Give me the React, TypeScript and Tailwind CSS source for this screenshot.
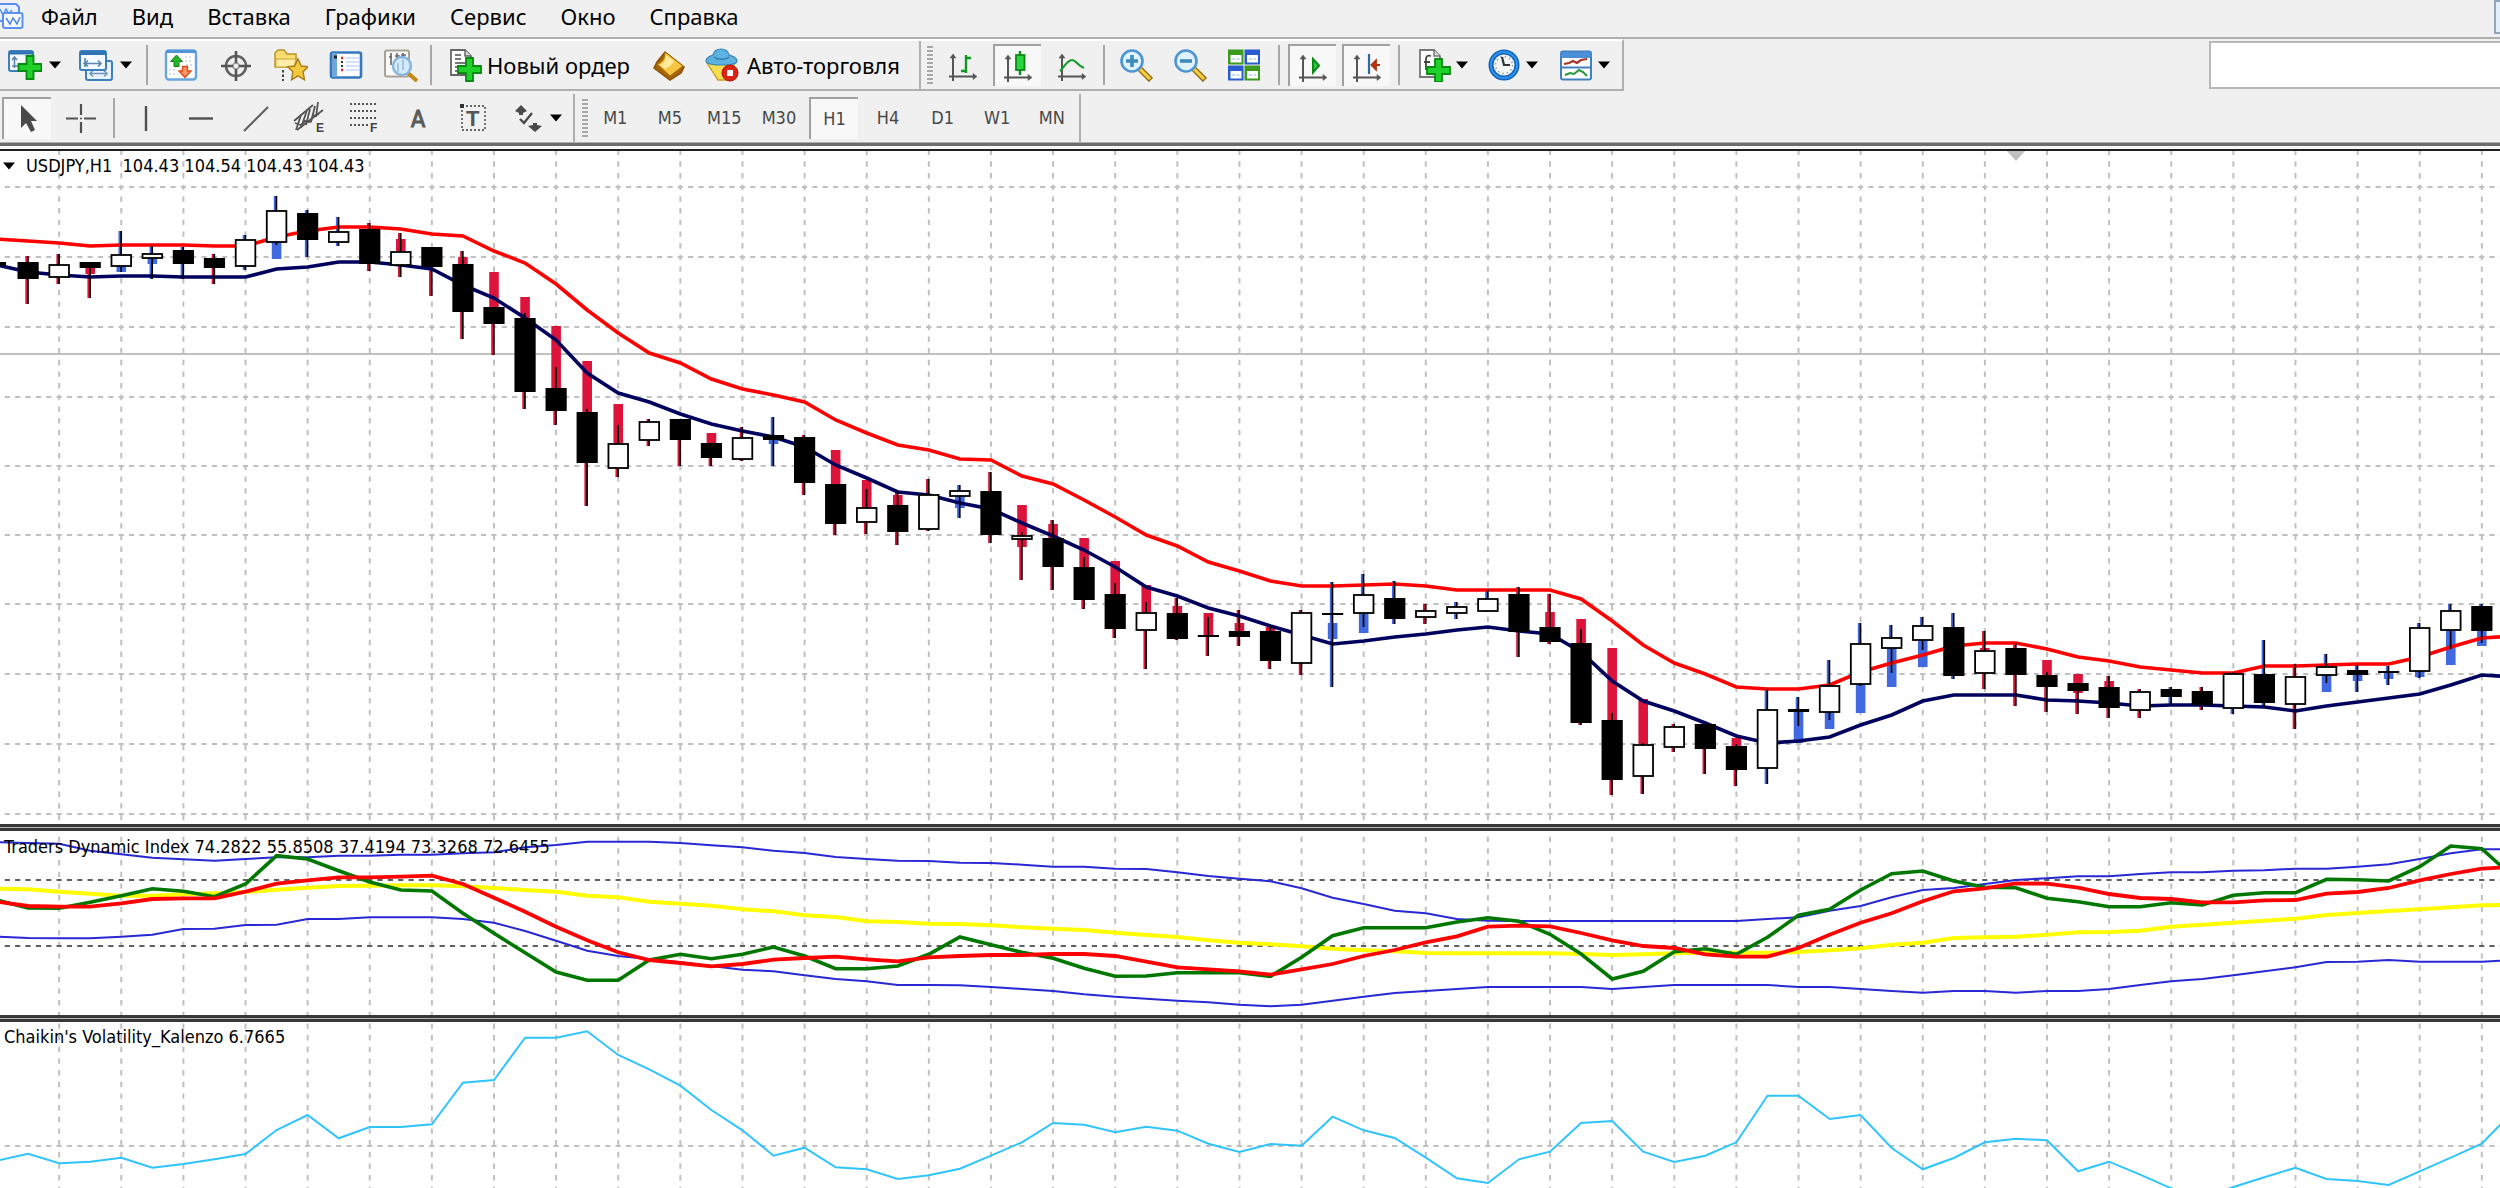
import type { ReactNode } from "react";
import clsx from "clsx";

type Trend = "r" | "b";

// kind, trend, wick top, body top, body bottom, wick bottom, [bar top, bar bottom]
type Candle = [0 | 1, Trend, number, number, number, number, number?, number?];

const STEP = 31.06;
const FIRST_X = 28.1;
const WIDTH = 2500;

const CANDLES: Candle[] = [
  [1, "r", 256, 262, 279, 304],
  [0, "r", 254, 264, 277, 284],
  [1, "r", 262, 262, 268, 298, 268, 274],
  [0, "b", 231, 254, 266, 272, 266, 272],
  [0, "b", 246, 253, 258, 279, 258, 264],
  [1, "b", 247, 250, 264, 279],
  [1, "r", 254, 258, 268, 284],
  [0, "b", 235, 239, 266, 270],
  [0, "b", 196, 210, 242, 245, 242, 259],
  [1, "b", 210, 213, 240, 257],
  [0, "b", 217, 231, 242, 246],
  [1, "r", 223, 229, 264, 271],
  [0, "r", 233, 251, 265, 277, 239, 251],
  [1, "r", 247, 247, 267, 296],
  [1, "r", 251, 264, 312, 339, 257, 264],
  [1, "r", 307, 307, 324, 355, 272, 307],
  [1, "r", 313, 318, 392, 409, 297, 318],
  [1, "r", 367, 388, 411, 425, 326, 388],
  [1, "r", 409, 412, 463, 506, 361, 412],
  [0, "r", 425, 443, 468, 477, 404, 443],
  [0, "r", 419, 421, 440, 446],
  [1, "r", 419, 419, 440, 466],
  [1, "r", 443, 443, 458, 466, 433, 443],
  [0, "r", 427, 437, 459, 461],
  [1, "b", 417, 435, 440, 466, 440, 444],
  [1, "r", 435, 437, 483, 495],
  [1, "r", 484, 484, 524, 535, 450, 484],
  [0, "r", 489, 507, 522, 534, 480, 507],
  [1, "r", 490, 505, 532, 545, 495, 505],
  [0, "r", 479, 494, 529, 531],
  [0, "b", 485, 490, 496, 518, 496, 508],
  [1, "r", 472, 491, 535, 543],
  [0, "r", 532, 535, 539, 580, 505, 547],
  [1, "r", 520, 538, 567, 590, 524, 538],
  [1, "r", 557, 567, 600, 609, 538, 567],
  [1, "r", 583, 594, 629, 638, 561, 594],
  [0, "r", 602, 612, 630, 669, 585, 612],
  [1, "r", 598, 613, 639, 640, 606, 613],
  [1, "r", 617, 635, 637, 656, 613, 635],
  [1, "r", 610, 631, 637, 646, 623, 631],
  [1, "r", 625, 631, 661, 669, 627, 631],
  [0, "r", 610, 612, 663, 675],
  [1, "b", 582, 613, 615, 687, 623, 639],
  [0, "b", 574, 594, 613, 627, 613, 633],
  [1, "b", 581, 598, 619, 624],
  [0, "r", 604, 610, 617, 624],
  [0, "b", 602, 606, 613, 619],
  [0, "b", 589, 598, 611, 612],
  [1, "r", 587, 594, 632, 657],
  [1, "r", 594, 627, 642, 644, 612, 627],
  [1, "r", 629, 643, 723, 725, 619, 643],
  [1, "r", 713, 720, 780, 795, 648, 720],
  [0, "r", 743, 744, 776, 794, 699, 744],
  [0, "r", 724, 726, 747, 752],
  [1, "r", 724, 724, 749, 774],
  [1, "r", 744, 746, 770, 786, 738, 746],
  [0, "b", 689, 709, 768, 784],
  [1, "b", 697, 709, 712, 726, 712, 743],
  [0, "b", 660, 685, 712, 720, 712, 729],
  [0, "b", 623, 643, 684, 686, 684, 713],
  [0, "b", 625, 637, 648, 673, 648, 687],
  [0, "b", 617, 625, 640, 650, 640, 667],
  [1, "b", 613, 627, 676, 679],
  [0, "r", 631, 650, 673, 689, 648, 650],
  [1, "r", 643, 648, 675, 706],
  [1, "r", 672, 675, 687, 712, 660, 675],
  [1, "r", 683, 683, 691, 714, 674, 693],
  [1, "r", 676, 687, 708, 718, 681, 687],
  [0, "r", 689, 691, 710, 718],
  [1, "b", 687, 689, 697, 705],
  [1, "r", 687, 691, 705, 710],
  [0, "b", 672, 673, 708, 714],
  [1, "b", 640, 674, 703, 707],
  [0, "r", 664, 676, 704, 729],
  [0, "b", 654, 666, 675, 683, 675, 692],
  [1, "b", 665, 670, 675, 692, 675, 681],
  [1, "b", 666, 671, 673, 685, 673, 679],
  [0, "b", 623, 627, 671, 678, 671, 677],
  [0, "b", 604, 610, 630, 649, 630, 665],
  [1, "b", 604, 606, 631, 643, 631, 646],
];

// every series starts one step left of the window
const UPPER_MA = [
  239, 241, 243, 246, 245, 245, 245, 246, 246, 237, 231, 227, 227, 229, 234, 236, 251, 263, 284, 310,
  333, 353, 363, 379, 389, 395, 402, 420, 433, 445, 450, 459, 460, 476, 484, 500, 517, 535, 546, 562,
  571, 581, 586, 586, 585, 584, 586, 590, 590, 590, 590, 599, 621, 645, 663, 674, 687, 689, 689, 685,
  672, 663, 655, 646, 643, 643, 649, 657, 661, 667, 670, 673, 673, 666, 666, 665, 664, 664, 657, 647,
  638, 636,
];
const LOWER_MA = [
  265, 272, 275, 277, 276, 276, 277, 277, 277, 269, 267, 262, 262, 265, 269, 285, 298, 318, 340, 373,
  393, 402, 414, 424, 431, 437, 447, 465, 478, 492, 495, 503, 509, 523, 536, 550, 567, 587, 596, 608,
  616, 626, 635, 644, 641, 637, 634, 630, 627, 631, 634, 652, 681, 701, 711, 723, 736, 743, 741, 737,
  725, 715, 701, 695, 695, 695, 700, 701, 703, 706, 705, 705, 706, 707, 711, 706, 702, 698, 694, 685,
  675, 677,
];

// indicator values are stored in thirds of a pixel
const BAND_UP = [
  97, 99, 101, 122, 133, 143, 148, 152, 147, 142, 142, 137, 137, 134, 134, 130, 127, 112, 105, 95,
  95, 95, 99, 106, 112, 122, 129, 141, 147, 152, 153, 158, 159, 164, 170, 170, 176, 177, 187, 198,
  206, 214, 235, 263, 282, 302, 310, 327, 332, 333, 333, 333, 333, 333, 333, 333, 333, 327, 322, 302,
  288, 262, 240, 234, 222, 210, 205, 199, 199, 192, 187, 187, 182, 181, 176, 176, 170, 163, 147, 130,
  118, 118,
];
const BAND_LOW = [
  380, 384, 385, 385, 380, 374, 357, 356, 345, 344, 327, 327, 322, 322, 322, 327, 338, 363, 392, 422,
  438, 447, 457, 468, 479, 484, 496, 507, 514, 525, 525, 526, 531, 537, 543, 553, 560, 566, 572, 577,
  584, 589, 584, 572, 560, 549, 543, 537, 531, 531, 531, 531, 537, 531, 525, 525, 525, 525, 531, 531,
  537, 543, 548, 543, 543, 548, 543, 543, 537, 525, 514, 507, 496, 484, 472, 456, 455, 450, 455, 455,
  455, 450,
];
const BASE = [
  236, 238, 245, 251, 257, 257, 253, 250, 246, 239, 233, 228, 227, 226, 226, 229, 234, 240, 245, 257,
  262, 275, 281, 287, 298, 304, 316, 321, 334, 336, 341, 342, 346, 352, 356, 360, 368, 375, 381, 391,
  398, 403, 409, 416, 421, 424, 429, 430, 430, 430, 430, 432, 435, 433, 430, 428, 428, 428, 426, 421,
  415, 404, 398, 384, 382, 380, 374, 367, 366, 362, 350, 344, 338, 332, 326, 315, 309, 303, 298, 292,
  286, 284,
];
const RSI = [
  270, 294, 295, 277, 257, 236, 244, 260, 222, 137, 147, 182, 216, 240, 243, 310, 370, 428, 486, 511,
  511, 450, 433, 446, 433, 411, 438, 476, 476, 468, 433, 381, 404, 427, 445, 475, 499, 498, 488, 488,
  488, 499, 442, 377, 353, 353, 353, 336, 323, 334, 373, 432, 507, 484, 425, 416, 433, 382, 316, 298,
  240, 191, 183, 213, 232, 233, 265, 275, 290, 290, 278, 285, 256, 248, 248, 208, 209, 213, 170, 108,
  116, 200,
];
const SIGNAL = [
  275, 288, 290, 290, 280, 267, 265, 265, 245, 221, 211, 202, 202, 200, 197, 222, 263, 305, 350, 391,
  427, 450, 459, 469, 462, 449, 444, 440, 448, 454, 442, 438, 435, 435, 432, 432, 438, 455, 472, 478,
  484, 494, 478, 462, 438, 420, 397, 379, 350, 347, 349, 369, 391, 408, 414, 433, 440, 440, 414, 374,
  338, 310, 274, 244, 235, 220, 221, 233, 252, 264, 267, 277, 277, 271, 270, 251, 246, 234, 211, 192,
  176, 170,
];
const VOLATILITY = [
  1052, 1031, 1060, 1055, 1043, 1073, 1062, 1048, 1032, 960, 915, 985, 951, 951, 943, 818, 810, 683,
  683, 664, 735, 778, 827, 900, 961, 1037, 1013, 1072, 1078, 1107, 1096, 1076, 1037, 997, 939, 944,
  967, 950, 962, 1001, 1026, 1002, 1007, 920, 961, 984, 1043, 1105, 1119, 1048, 1025, 939, 933, 1025,
  1056, 1037, 997, 857, 857, 927, 915, 1014, 1078, 1044, 997, 986, 991, 1084, 1055, 1094, 1135, 1165,
  1131, 1102, 1073, 1107, 1113, 1125, 1084, 1043, 1001, 905,
];

const GRID_ROWS = [187, 257, 327, 397, 466, 535, 604, 674, 744, 814];

const xAt = (i: number) => FIRST_X + STEP * i;
const series = (values: number[], y: (v: number) => number) =>
  values.map((v, i) => `${xAt(i - 1).toFixed(1)},${y(v).toFixed(1)}`).join(" ");
const same = (v: number) => v;
const thirds = (v: number) => 810 + v / 3;

function GridColumns({ top, bottom }: { top: number; bottom: number }) {
  return (
    <g stroke="#c0c0c0" strokeWidth="2" strokeDasharray="5.4 6.27">
      {Array.from({ length: 40 }, (_, k) => {
        const x = FIRST_X + STEP + k * STEP * 2;
        return <line key={k} x1={x} x2={x} y1={top} y2={bottom} />;
      })}
    </g>
  );
}

function GridRow({ y }: { y: number }) {
  return (
    <line x1="-5.6" x2={WIDTH} y1={y} y2={y} stroke="#c0c0c0" strokeWidth="2" strokeDasharray="5.2 5.153" />
  );
}

function CandleMark({ candle, index }: { candle: Candle; index: number }) {
  const [, trend, high, , , low, barTop, barBottom] = candle;
  const x = xAt(index);
  const color = trend === "r" ? "#dc143c" : "#4169e1";
  return (
    <g fill={color}>
      <rect x={x - 2.8} y={high} width="3" height={low - high} />
      {barTop !== undefined && barBottom !== undefined && (
        <rect x={x - 4.8} y={barTop} width="9.6" height={barBottom - barTop} />
      )}
    </g>
  );
}

function CandleBody({ candle, index }: { candle: Candle; index: number }) {
  const [filled, , high, top, bottom, low] = candle;
  const x = xAt(index);
  return (
    <g>
      <rect x={x - 1} y={high} width="1.7" height={low - high} fill="#000" />
      {filled ? (
        <rect x={x - 10.6} y={top} width="21.2" height={bottom - top} fill="#000" />
      ) : (
        <rect
          x={x - 9.8}
          y={top + 1}
          width="19.6"
          height={bottom - top - 1}
          fill="#fff"
          stroke="#000"
          strokeWidth="1.8"
        />
      )}
    </g>
  );
}

function PriceChart() {
  return (
    <svg className="block h-full w-full" viewBox="0 151 2500 673" preserveAspectRatio="none">
      <GridColumns top={149.7} bottom={824} />
      {GRID_ROWS.map((y) => (
        <GridRow key={y} y={y} />
      ))}
      <line x1="0" x2={WIDTH} y1="354" y2="354" stroke="#c0c0c0" strokeWidth="2" />
      <path d="M2007 151h18l-9 10z" fill="#c0c0c0" />
      {CANDLES.map((c, i) => (
        <CandleMark key={i} candle={c} index={i} />
      ))}
      <polyline points={series(UPPER_MA, same)} fill="none" stroke="#f00" strokeWidth="3.6" />
      <polyline points={series(LOWER_MA, same)} fill="none" stroke="#00005f" strokeWidth="3.6" />
      <rect x="0" y="262" width="6" height="4" fill="#000" />
      {CANDLES.map((c, i) => (
        <CandleBody key={i} candle={c} index={i} />
      ))}
    </svg>
  );
}

function DynamicIndexChart() {
  return (
    <svg className="block h-full w-full" viewBox="0 831 2500 184" preserveAspectRatio="none">
      <GridColumns top={836.7} bottom={1015} />
      <g stroke="#606060" strokeWidth="2" strokeDasharray="5.2 5.153">
        <line x1="-5.6" x2={WIDTH} y1="880" y2="880" />
        <line x1="-5.6" x2={WIDTH} y1="946" y2="946" />
      </g>
      <g fill="none">
        <polyline points={series(BAND_UP, thirds)} stroke="#2828d4" strokeWidth="2" />
        <polyline points={series(BAND_LOW, thirds)} stroke="#2828d4" strokeWidth="2" />
        <polyline points={series(BASE, thirds)} stroke="#ff0" strokeWidth="4" />
        <polyline points={series(RSI, thirds)} stroke="#007800" strokeWidth="3.6" />
        <polyline points={series(SIGNAL, thirds)} stroke="#f00" strokeWidth="3.8" />
      </g>
    </svg>
  );
}

function VolatilityChart() {
  return (
    <svg className="block h-full w-full" viewBox="0 1022 2500 166" preserveAspectRatio="none">
      <GridColumns top={1023.4} bottom={1188} />
      <GridRow y={1146} />
      <polyline points={series(VOLATILITY, thirds)} fill="none" stroke="#30c4ff" strokeWidth="2" />
    </svg>
  );
}

function Icon({ children }: { children: ReactNode }) {
  return (
    <svg className="block shrink-0" width="34" height="34" viewBox="0 0 34 34" fill="none" aria-hidden="true">
      {children}
    </svg>
  );
}

function Plus({ x, y }: { x: number; y: number }) {
  return (
    <path
      d={`M${x + 8} ${y}h7v8h8v7h-8v8h-7v-8h-8v-7h8z`}
      fill="#1fd22a"
      stroke="#078a10"
      strokeWidth="1.8"
    />
  );
}

function Axes() {
  return (
    <g stroke="#555" strokeWidth="2" fill="#555">
      <path d="M7 33V8M3 28.5h26" />
      <path d="M4 10l3-4 3 4zM27 25.5l4 3-4 3z" strokeWidth="0.5" />
    </g>
  );
}

const icons = {
  newChart: (
    <Icon>
      <rect x="1" y="3" width="24" height="20" rx="2" fill="#f4faff" stroke="#3b7fbe" strokeWidth="2" />
      <path d="M1 3.5h24v3H1z" fill="#2f74b5" />
      <path d="M6.5 20V10M4 12l2.5-3 2.5 3M4 18h8" stroke="#5b86ad" strokeWidth="1.6" />
      <Plus x={10.5} y={8} />
    </Icon>
  ),
  profiles: (
    <Icon>
      <rect x="7" y="13" width="26" height="19" rx="2" fill="#e8f3fc" stroke="#3b7fbe" strokeWidth="2" />
      <path d="M11 25.5h17M14 22.5l-3 3 3 3M25 22.5l3 3-3 3" stroke="#7197b8" strokeWidth="1.6" />
      <rect x="1" y="3" width="26" height="19" rx="2" fill="#f4faff" stroke="#3b7fbe" strokeWidth="2" />
      <path d="M1 3h26v4H1z" fill="#2f74b5" />
      <path d="M6 19V10M4 15.5h18M19 12.5l3 3-3 3M9 12.5l-3 3 3 3" stroke="#5b86ad" strokeWidth="1.6" />
    </Icon>
  ),
  market: (
    <Icon>
      <rect x="2" y="2.5" width="30" height="29" rx="3" fill="#fff" stroke="#68a5de" strokeWidth="2.4" />
      <path d="M2 3.5h30" stroke="#4f95d8" strokeWidth="3" />
      <path d="M21 9h8M21 13h8M22 17h7M5 22h7M5 26h9" stroke="#ccd4dd" strokeWidth="1.5" strokeDasharray="2 2" />
      <path d="M12.500 7l6 6.500h-3.500v5h-5v-5H6.500z" fill="#27b32b" stroke="#0e8414" />
      <path d="M21 29.500l-6-6.500h3.500v-4.500h5V23h3.500z" fill="#ff9468" stroke="#dd4a17" strokeWidth="1.400" />
    </Icon>
  ),
  target: (
    <Icon>
      <circle cx="17" cy="18" r="10" stroke="#626262" strokeWidth="2.6" />
      <circle cx="17" cy="18" r="3" stroke="#999" strokeWidth="1.5" />
      <path d="M17 3v12M17 21v12M2 18h12M20 18h12" stroke="#555" strokeWidth="2.6" />
    </Icon>
  ),
  favorites: (
    <Icon>
      <path d="M1 5l3-3h6l3 4h9v13H1z" fill="#f8df70" stroke="#b8932a" strokeWidth="1.5" />
      <path d="M2 11h20l-2 8H2z" fill="#ffeeaa" stroke="#c9a339" />
      <path d="M9 22v11" stroke="#444" strokeWidth="2" strokeDasharray="2.5 2" />
      <path d="M24 11l3.3 7 7 .8-5.2 5 1.4 8-6.500-4-6.500 4 1.400-8-5.200-5 7-.8z" fill="#f5c93e" stroke="#a87d19" strokeWidth="1.4" />
    </Icon>
  ),
  navigator: (
    <Icon>
      <rect x="2" y="4.5" width="30" height="25" rx="2" fill="#fff" stroke="#3478bd" strokeWidth="2.6" />
      <path d="M3 5h5v24H3z" fill="#6fa6db" />
      <path d="M5 9h3" stroke="#222" strokeWidth="3" />
      <path d="M12 10h2M12 22h2" stroke="#e22" strokeWidth="2.5" />
      <path d="M12 14h2M12 18h2" stroke="#333" strokeWidth="2" />
      <path d="M17 10h13M17 14h13M17 18h13M17 22h13" stroke="#c6d9f5" strokeWidth="1.4" />
    </Icon>
  ),
  tester: (
    <Icon>
      <rect x="1" y="2.5" width="24" height="26" rx="2" fill="#fafafa" stroke="#aaa196" strokeWidth="2" />
      <path d="M7 5v12M5 9h3M13 5v5M11 8h5M19 5v8M17 7h5" stroke="#666" strokeWidth="1.6" />
      <path d="M24 25l9 8" stroke="#c58a16" strokeWidth="4" />
      <circle cx="18" cy="18" r="9" fill="#cfe8fbdd" stroke="#86b4dc" strokeWidth="2.4" />
      <path d="M14 15v9M19 12v10" stroke="#93b9d8" strokeWidth="1.5" />
    </Icon>
  ),
  newOrder: (
    <Icon>
      <path d="M2 2h14l6 6v19H2z" fill="#fff" stroke="#666" strokeWidth="1.8" />
      <path d="M16 2v6h6" fill="#ddd" stroke="#666" strokeWidth="1.5" />
      <path d="M6 7h6M6 11h6M6 15h12M6 19h8M6 23h5" stroke="#777" strokeWidth="1.8" />
      <Plus x={9} y={10} />
    </Icon>
  ),
  gold: (
    <Icon>
      <path d="M13 4l19 15-3 6-11 7L2 20l3-6z" fill="#a86508" stroke="#8c5205" strokeWidth="1.5" />
      <path d="M13 4l18 14-13 10L5 16c5-1 8-5 8-12z" fill="#f6c544" stroke="#a66c08" />
      <path d="M14 7c0 6-3 9-6 10l5 4c4-2 8-5 9-8z" fill="#ffe99a" />
    </Icon>
  ),
  autoTrade: (
    <Icon>
      <path d="M2 15h28l-9 17h-8z" fill="#f7dd52" stroke="#c39c1a" strokeWidth="1.3" />
      <path d="M1 13c0-4 5-5 7-6 1-4 4-6 8-6s7 2 8 6c3 1 8 2 8 6 0 3-7 4-15 4S1 16 1 13z" fill="#5eb2df" stroke="#3684b5" strokeWidth="1.2" />
      <path d="M9 9c3 3 12 3 15 0" stroke="#2f7cad" strokeWidth="1.5" />
      <circle cx="25" cy="25" r="8" fill="#dc2413" stroke="#b11406" />
      <rect x="22" y="22" width="6" height="6" fill="#fff" />
    </Icon>
  ),
  bars: (
    <Icon>
      <Axes />
      <path d="M20 7v18M20 10h5M15 23h5" stroke="#119822" strokeWidth="2.4" />
    </Icon>
  ),
  candles: (
    <Icon>
      <Axes />
      <path d="M19 2v24" stroke="#0c8a17" strokeWidth="2.4" />
      <rect x="15" y="6" width="8.5" height="15" fill="#26d63a" stroke="#0c8a17" strokeWidth="1.8" />
    </Icon>
  ),
  line: (
    <Icon>
      <Axes />
      <path d="M5 23c3-2 7-11 12-11 4 0 6 6 12 8" stroke="#1a9c2c" strokeWidth="2.2" />
    </Icon>
  ),
  zoomIn: (
    <Icon>
      <path d="M21 21l11 11" stroke="#9a7414" strokeWidth="6" />
      <path d="M21 21l10 10" stroke="#f4cf45" strokeWidth="3" />
      <circle cx="13" cy="13" r="10.5" fill="#dff3ff" stroke="#4c94d2" strokeWidth="2.6" />
      <path d="M13 7v12M7 13h12" stroke="#3e8abb" strokeWidth="3.6" />
    </Icon>
  ),
  zoomOut: (
    <Icon>
      <path d="M21 21l11 11" stroke="#9a7414" strokeWidth="6" />
      <path d="M21 21l10 10" stroke="#f4cf45" strokeWidth="3" />
      <circle cx="13" cy="13" r="10.5" fill="#dff3ff" stroke="#4c94d2" strokeWidth="2.6" />
      <path d="M7 13h12" stroke="#3e8abb" strokeWidth="3.6" />
    </Icon>
  ),
  tile: (
    <Icon>
      <path d="M1 1.500h15.500v15H1zM17.500 17.500H33v15H17.500z" fill="#3c9a1f" />
      <path d="M17.500 1.500H33v15H17.500zM1 17.500h15.500v15H1z" fill="#2a5bd0" />
      <path d="M3.500 7h11v7.500h-11zM20 7h11v7.500H20zM3.500 23h11v7.500h-11zM20 23h11v7.500H20z" fill="#fff" />
      <path d="M5 11h8M22 11h7M5 27h8M22 27h7" stroke="#b7cbe8" strokeWidth="1.6" strokeDasharray="3 1.5" />
    </Icon>
  ),
  autoScroll: (
    <Icon>
      <Axes />
      <path d="M17 10l6 6.500-6 7z" fill="#33cc44" stroke="#0c8a17" strokeWidth="2" />
    </Icon>
  ),
  chartShift: (
    <Icon>
      <Axes />
      <path d="M19 5v20" stroke="#2d6a9e" strokeWidth="2.2" />
      <path d="M30 16h-5M26 11.500l-4.500 4.500 4.500 4.500z" fill="#c23a0c" stroke="#a8320b" strokeWidth="1.8" />
    </Icon>
  ),
  indicators: (
    <Icon>
      <path d="M2 2h14l6 6v21H2z" fill="#fff" stroke="#777" strokeWidth="1.8" />
      <path d="M16 2v6h6" fill="#ddd" stroke="#777" strokeWidth="1.5" />
      <path d="M13 8c-3-1-5 0-5 3v11M6 14h6" stroke="#444" strokeWidth="1.8" />
      <Plus x={9} y={11} />
    </Icon>
  ),
  periods: (
    <Icon>
      <circle cx="17" cy="17" r="13" fill="#f3f6f8" stroke="#1463b8" strokeWidth="5" />
      <circle cx="17" cy="17" r="13" stroke="#2b93f0" strokeWidth="2" />
      <circle cx="17" cy="17" r="8.5" stroke="#999" strokeWidth="1.5" strokeDasharray="1.5 3" />
      <path d="M15 9l2 8h6" stroke="#333" strokeWidth="2.2" />
    </Icon>
  ),
  templates: (
    <Icon>
      <rect x="2" y="3.5" width="30" height="28" rx="2" fill="#fff" stroke="#3f80c2" strokeWidth="2" />
      <path d="M2 4h30v6H2z" fill="#4a8fd8" />
      <path d="M2 19.5h30" stroke="#3f80c2" strokeWidth="2" />
      <path d="M5 16l5-1 4-2 4 2 4-3 6-1" stroke="#a63426" strokeWidth="2.2" />
      <path d="M6 27l5-2 4 1 5-4 4 2 4 4" stroke="#22983a" strokeWidth="2" />
    </Icon>
  ),
  cursor: (
    <Icon>
      <path d="M10 3v23l5-5 5 9 4-2-4-9h6z" fill="#4a4a4a" />
    </Icon>
  ),
  crosshair: (
    <Icon>
      <path d="M17 3v11M17 21v11M2 17.5h12M20 17.5h12" stroke="#505050" strokeWidth="2.2" />
      <path d="M16 17.5h2" stroke="#505050" strokeWidth="1.5" />
    </Icon>
  ),
  vLine: (
    <Icon>
      <path d="M17 5v25" stroke="#505050" strokeWidth="2.4" />
    </Icon>
  ),
  hLine: (
    <Icon>
      <path d="M5 17.5h24" stroke="#505050" strokeWidth="2.4" />
    </Icon>
  ),
  trend: (
    <Icon>
      <path d="M5 30L29 6" stroke="#606060" strokeWidth="2.2" />
    </Icon>
  ),
  channel: (
    <Icon>
      <path d="M1 20L20 4M4 29L30 9" stroke="#555" strokeWidth="1.8" />
      <path d="M3 29l5-15M8 27l6-18M13 24l4-16M18 21l4-16M23 16l2-15M2 22l6 2 4-4 5 1 3-6 6-2" stroke="#555" strokeWidth="1.8" />
      <text x="23" y="31" fill="#444" fontSize="12" fontWeight="700" fontFamily="Liberation Sans, sans-serif">E</text>
    </Icon>
  ),
  fibo: (
    <Icon>
      <path d="M3 3h27M3 10h27M3 17h27M3 24h18" stroke="#555" strokeWidth="2" strokeDasharray="2 2" />
      <text x="23" y="31" fill="#444" fontSize="12" fontWeight="700" fontFamily="Liberation Sans, sans-serif">F</text>
    </Icon>
  ),
  text: (
    <Icon>
      <text x="10" y="26" fill="#5a5a5a" stroke="#5a5a5a" strokeWidth="1" fontSize="23" fontFamily="DejaVu Sans Condensed, DejaVu Sans, sans-serif">A</text>
    </Icon>
  ),
  label: (
    <Icon>
      <rect x="6" y="5" width="23" height="24" stroke="#666" strokeWidth="1.8" strokeDasharray="2 2" />
      <path d="M4 3h4v4H4z" fill="#333" />
      <text x="10" y="25" fill="#555" fontSize="22" fontWeight="700" fontFamily="Liberation Sans, sans-serif">T</text>
    </Icon>
  ),
  arrows: (
    <Icon>
      <path d="M10 4l6 6-4 2v2H8v-2l-4-2zM24 31l-7-6 5-1v-2h4v2l5 1z" fill="#4a4a4a" />
      <path d="M9 18l4 4 8-10" stroke="#4a4a4a" strokeWidth="2.4" />
    </Icon>
  ),
};

function Caret() {
  return (
    <svg className="block shrink-0" width="14" height="8" viewBox="0 0 14 8" aria-hidden="true">
      <path d="M1 0.500h12L7 7.500z" fill="#000" />
    </svg>
  );
}

interface ToolProps {
  name: string;
  icon: ReactNode;
  pressed?: boolean;
  className?: string;
}

function Tool({ name, icon, pressed, className }: ToolProps) {
  return (
    <button
      type="button"
      aria-label={name}
      aria-pressed={pressed}
      className={clsx(
        "flex h-[42px] shrink-0 items-center justify-center",
        pressed && "border-t-2 border-l-2 border-[#a0a0a0] bg-[#f8f8f8]",
        className ?? "w-[54px]",
      )}
    >
      {icon}
    </button>
  );
}

function MenuTool({ name, icon, className }: ToolProps) {
  return (
    <button
      type="button"
      aria-label={name}
      aria-haspopup="menu"
      className={clsx("flex h-[42px] shrink-0 items-center", className)}
    >
      {icon}
      <Caret />
    </button>
  );
}

function Separator({ className }: { className?: string }) {
  return <div className={clsx("h-[40px] w-[2px] shrink-0 bg-[#a8a8a8]", className)} />;
}

function Grip() {
  return (
    <div className="h-[38px] w-[6px] shrink-0 bg-[repeating-linear-gradient(to_bottom,#a8a8a8_0px,#a8a8a8_2px,#f0f0f0_2px,#f0f0f0_4px)]" />
  );
}

const MENU = ["Файл", "Вид", "Вставка", "Графики", "Сервис", "Окно", "Справка"];
const TIMEFRAMES = ["M1", "M5", "M15", "M30", "H1", "H4", "D1", "W1", "MN"];

function MenuBar() {
  return (
    <header className="flex h-[37px] items-start justify-between">
      <div className="flex items-center">
        <svg className="block" width="24" height="32" viewBox="0 0 24 32" fill="none" aria-hidden="true">
          <path d="M-4 4h20l3 3v14H-4z" fill="#eaf2ff" stroke="#5a90ec" strokeWidth="2" />
          <path d="M0 9l3 6 3-6 3 5 3-4" stroke="#5a90ec" strokeWidth="1.5" />
          <rect x="3" y="13" width="19.5" height="15" rx="2" fill="#f6faff" stroke="#5a90ec" strokeWidth="2" />
          <path d="M6 18l4 6 3-6 4 6 3-7" stroke="#4c84e6" strokeWidth="1.5" />
        </svg>
        <nav className="flex text-[22px] leading-[32px] text-black">
          {MENU.map((item) => (
            <button key={item} type="button" className="px-[17px]">
              {item}
            </button>
          ))}
        </nav>
      </div>
      <button
        type="button"
        aria-label="Свернуть"
        className="h-[34px] w-[6px] border-y-2 border-l-2 border-[#93a5ba] bg-[#e3effb]"
      />
    </header>
  );
}

function StandardToolbar() {
  return (
    <div className="flex h-[54px] items-start justify-between border-t-2 border-[#b0b0b0]">
      <div className="flex h-[52px] shrink-0 items-center border-r-2 border-b-2 border-[#b0b0b0] border-t-2 border-t-white">
        <MenuTool name="Новый график" icon={icons.newChart} className="w-[70px] gap-[6px] pl-[8px]" />
        <MenuTool name="Профили" icon={icons.profiles} className="w-[76px] gap-[6px] pl-[9px]" />
        <Separator />
        <div className="flex pl-[5px]">
          <Tool name="Обзор рынка" icon={icons.market} className="w-[55px]" />
          <Tool name="Окно данных" icon={icons.target} className="w-[55px]" />
          <Tool name="Навигатор" icon={icons.favorites} className="w-[55px]" />
          <Tool name="Терминал" icon={icons.navigator} className="w-[55px]" />
          <Tool name="Тестер стратегий" icon={icons.tester} className="w-[55px]" />
        </div>
        <Separator className="ml-[2px]" />
        <button type="button" className="flex h-[42px] w-[212px] shrink-0 items-center gap-[4px] pl-[17px] text-[22px] leading-[30px] whitespace-nowrap text-black">
          {icons.newOrder}
          Новый ордер
        </button>
        <Tool name="MetaEditor" icon={icons.gold} className="w-[49px]" />
        <button type="button" className="flex h-[42px] w-[226px] shrink-0 items-center gap-[8px] pl-[12px] text-[22px] leading-[30px] whitespace-nowrap text-black">
          {icons.autoTrade}
          Авто-торговля
        </button>
        <div className="mr-[6px] w-[2px] self-stretch bg-[#b0b0b0]" />
        <Grip />
        <div className="flex gap-[4px] pl-[4px]">
          <Tool name="Бары" icon={icons.bars} className="w-[52px]" />
          <Tool name="Японские свечи" icon={icons.candles} pressed className="w-[48px]" />
          <Tool name="Линия" icon={icons.line} className="w-[54px]" />
        </div>
        <Separator className="mx-[4px]" />
        <Tool name="Увеличить" icon={icons.zoomIn} />
        <Tool name="Уменьшить" icon={icons.zoomOut} />
        <Tool name="Окна рядом" icon={icons.tile} />
        <Separator className="mr-[8px] ml-[7px]" />
        <div className="flex gap-[6px]">
          <Tool name="Автопрокрутка" icon={icons.autoScroll} pressed className="w-[48px]" />
          <Tool name="Сдвиг графика" icon={icons.chartShift} pressed className="w-[48px]" />
        </div>
        <Separator className="mx-[8px]" />
        <MenuTool name="Индикаторы" icon={icons.indicators} className="w-[71px] gap-[3px] pl-[10px]" />
        <MenuTool name="Периоды" icon={icons.periods} className="w-[71px] gap-[4px] pl-[8px]" />
        <MenuTool name="Шаблоны" icon={icons.templates} className="w-[72px] gap-[4px] pl-[9px]" />
      </div>
      <input
        type="text"
        aria-label="Поиск"
        className="mt-[2px] h-[48px] w-[291px] border-2 border-r-0 border-[#b8b8b8] bg-white px-2 outline-none"
      />
    </div>
  );
}

function DrawingToolbar() {
  return (
    <div className="flex h-[51px] items-center pt-[3px]">
      <Tool name="Курсор" icon={icons.cursor} pressed className="ml-[2px] w-[49px]" />
      <Tool name="Перекрестие" icon={icons.crosshair} className="w-[59px]" />
      <Separator className="mx-[3px]" />
      <Tool name="Вертикальная линия" icon={icons.vLine} className="w-[55px]" />
      <Tool name="Горизонтальная линия" icon={icons.hLine} className="w-[55px]" />
      <Tool name="Трендовая линия" icon={icons.trend} className="w-[55px]" />
      <Tool name="Равноудаленный канал" icon={icons.channel} />
      <Tool name="Линии Фибоначчи" icon={icons.fibo} />
      <Tool name="Текст" icon={icons.text} />
      <Tool name="Текстовая метка" icon={icons.label} className="w-[55px]" />
      <MenuTool name="Стрелки" icon={icons.arrows} className="w-[73px] gap-[4px] pl-[11px]" />
      <div className="mr-[7px] w-[2px] self-stretch bg-[#b0b0b0]" />
      <Grip />
      <div className="grid w-[491px] shrink-0 grid-cols-9 font-['DejaVu_Sans_Condensed','DejaVu_Sans',sans-serif] text-[18px] leading-[20px] text-[#484848]">
        {TIMEFRAMES.map((tf) => (
          <button
            key={tf}
            type="button"
            aria-pressed={tf === "H1"}
            className={clsx(
              "mx-[3px] h-[42px] text-center",
              tf === "H1" && "border-t-2 border-l-2 border-[#a0a0a0] bg-[#f8f8f8]",
            )}
          >
            {tf}
          </button>
        ))}
      </div>
      <div className="w-[2px] self-stretch bg-[#b0b0b0]" />
    </div>
  );
}

function Divider() {
  return <div className="h-[7px] shrink-0 border-y-3 border-[#383838] bg-[#b4b8b4]" />;
}

export default function App() {
  return (
    <div className="flex h-screen min-h-[700px] flex-col overflow-hidden bg-[#f0f0f0] font-['Noto_Sans','Open_Sans',sans-serif]">
      <MenuBar />
      <StandardToolbar />
      <DrawingToolbar />
      <div className="h-[4px] shrink-0 border-t border-[#b0b0b0] bg-[#6c6c6c]" />
      <div className="h-[3px] shrink-0 bg-[#f8f8f8]" />
      <div className="h-[2px] shrink-0 bg-[#202020]" />
      <main className="flex min-h-0 flex-1 flex-col bg-white font-['DejaVu_Sans_Condensed','DejaVu_Sans',sans-serif] text-[18px] leading-[20px] text-black">
        <section className="relative min-h-0 flex-1">
          <PriceChart />
          <h2 className="absolute top-[5px] left-[2px] flex items-center gap-[10px] whitespace-pre">
            <Caret />
            {"USDJPY,H1  104.43 104.54 104.43 104.43"}
          </h2>
        </section>
        <Divider />
        <section className="relative h-[184px] shrink-0">
          <DynamicIndexChart />
          <h2 className="absolute top-[6px] left-[4px] whitespace-nowrap">
            Traders Dynamic Index 74.2822 55.8508 37.4194 73.3268 72.6455
          </h2>
        </section>
        <Divider />
        <section className="relative h-[166px] shrink-0">
          <VolatilityChart />
          <h2 className="absolute top-[5px] left-[4px] whitespace-nowrap">
            Chaikin's Volatility_Kalenzo 6.7665
          </h2>
        </section>
      </main>
    </div>
  );
}
